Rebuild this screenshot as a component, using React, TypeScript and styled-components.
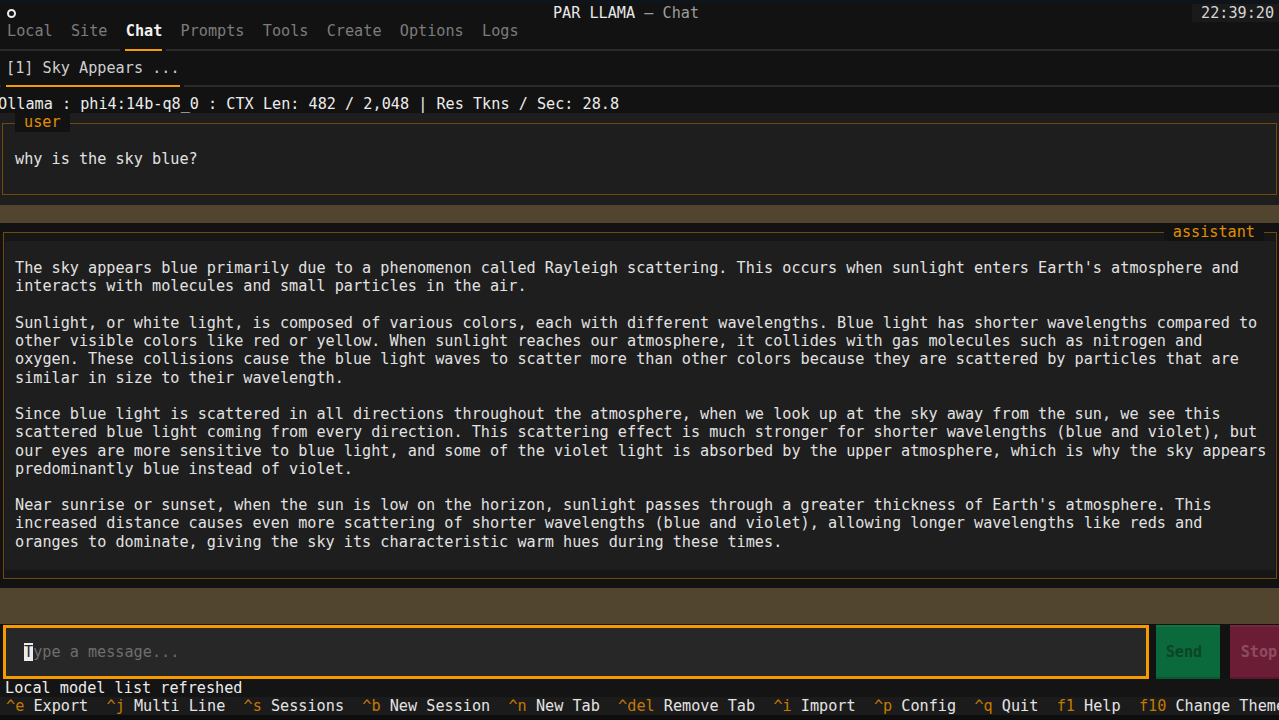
import React from "react";
import styled, { createGlobalStyle } from "styled-components";

const R = 18.24;
const C = 9.14;

const Global = createGlobalStyle`
  html, body { margin: 0; padding: 0; background: #121212; }
  body {
    width: 1279px; height: 720px; overflow: hidden;
    font-family: "DejaVu Sans Mono", "Liberation Mono", monospace;
    font-size: 15.18px; line-height: ${R}px; color: #e2e2e2;
  }
  * { box-sizing: border-box; }
`;

const Screen = styled.div`
  width: 1279px; height: 720px; display: flex; flex-direction: column;
  background: #121212; overflow: hidden; white-space: pre;
`;

const TopStrip = styled.div`
  height: 4px; flex: none; background: #0f141b;
`;

const Header = styled.header`
  height: ${R}px; flex: none; display: flex; align-items: center; background: #121212;
`;
const IconArea = styled.div`
  width: 60px; height: 100%; display: flex; align-items: center; padding-left: 7px;
`;
const HeaderIcon = styled.span`
  width: 9px; height: 9px; border: 2px solid #ececec; border-radius: 50%;
`;
const Title = styled.div`
  flex: 1; text-align: center; color: #e8e8e8;
`;
const TitleSub = styled.span`
  color: #9c9c9c;
`;
const Clock = styled.div`
  width: 87px; height: 100%; background: #1a1a1a; color: #d6d6d6; padding-left: 9px;
`;

const TabBar = styled.nav`
  height: ${2 * R}px; flex: none; display: flex; flex-direction: column;
`;
const TabLabels = styled.div<{ $left: number }>`
  height: ${R}px; display: flex; gap: ${2 * C}px; padding-left: ${(p) => p.$left}px;
`;
const Tab = styled.span<{ $active?: boolean; $sub?: boolean }>`
  color: ${(p) => (p.$sub ? "#cfcfcf" : p.$active ? "#f2f2f2" : "#7c7c7c")};
  font-weight: ${(p) => (p.$active ? "bold" : "normal")};
`;
const UnderlineRow = styled.div`
  height: ${R}px; display: flex; align-items: center;
`;
const Seg = styled.div<{ $w?: number; $kind: "grey" | "on" | "gap" }>`
  height: 2px;
  flex: ${(p) => (p.$w == null ? "1 1 auto" : `0 0 ${p.$w}px`)};
  background: ${(p) => (p.$kind === "grey" ? "#2b2b2b" : p.$kind === "on" ? "#f59a0c" : "transparent")};
`;

const Underline: React.FC<{ start: number; width: number }> = ({ start, width }) => (
  <UnderlineRow>
    <Seg $kind="grey" $w={start - 5} />
    <Seg $kind="gap" $w={5} />
    <Seg $kind="on" $w={width} />
    <Seg $kind="gap" $w={4} />
    <Seg $kind="grey" />
  </UnderlineRow>
);

const StatusLine = styled.div`
  height: ${R}px; flex: none; margin-left: -2px; color: #ececec;
`;

const UserWrap = styled.section`
  height: ${5 * R}px; flex: none; background: #1e1e1e;
  padding: ${R / 2}px 2px ${R / 2}px 2px;
  display: flex;
`;
const AssistantWrap = styled.section`
  height: ${20 * R}px; flex: none; background: #121212;
  padding: ${R / 2}px 2px ${R / 2}px 3px;
  display: flex;
`;
const Frame = styled.div<{ $bg: string }>`
  position: relative; flex: 1; border: 1px solid #70490c; background: ${(p) => p.$bg};
  display: flex; flex-direction: column;
`;
const FrameLabel = styled.span<{ $right?: boolean }>`
  position: absolute; top: ${-R / 2 - 1}px;
  ${(p) => (p.$right ? "right: 12px;" : "left: 12px;")}
  height: ${R}px; padding: 0 9px; background: #121212; color: #e38d00;
`;
const UserText = styled.div`
  padding: ${1.5 * R - 1}px 0 0 12px; color: #e2e2e2;
`;
const AssistantBody = styled.div`
  margin: 8px 1px; flex: 1; background: #1e1e1e; padding: ${R}px 0 0 10px; color: #e2e2e2;
`;
const Line = styled.div`
  height: ${R}px;
`;

const BrownBar = styled.div<{ $rows: number }>`
  height: ${(p) => p.$rows * R}px; flex: none; background: #524530;
`;

const InputRow = styled.div`
  height: ${3 * R}px; flex: none; display: flex; align-items: stretch; padding-top: 1px;
`;
const InputBox = styled.div`
  margin-left: 3px; width: 1146px; flex: none; border: 3px solid #f59b00; background: #272727;
  display: flex; align-items: center; padding-left: 18px; color: #6e6e6e;
`;
const Cursor = styled.span`
  background: #ececec; color: #272727;
`;
const Button = styled.div<{ $variant: "send" | "stop" }>`
  flex: none; width: 64px; display: flex; align-items: center; justify-content: flex-start;
  font-weight: bold;
  padding-left: ${(p) => (p.$variant === "send" ? "10px" : "11px")};
  margin-left: ${(p) => (p.$variant === "send" ? "6.7px" : "10px")};
  background: ${(p) => (p.$variant === "send" ? "#0b6a3b" : "#6b1d36")};
  color: ${(p) => (p.$variant === "send" ? "#0b4426" : "#8e4c63")};
  border-top: 2px solid ${(p) => (p.$variant === "send" ? "#0d7644" : "#782340")};
  border-bottom: 2px solid ${(p) => (p.$variant === "send" ? "#095a32" : "#5a172d")};
`;

const Notice = styled.div`
  height: ${R}px; flex: none; padding-left: 5px; color: #ececec; background: #141414;
`;

const Footer = styled.footer`
  height: ${R}px; flex: none; display: flex; gap: ${2 * C}px; padding-left: 6px;
  background: #1b1b1b; color: #e4e4e4;
`;
const FooterKey = styled.span`
  color: #c47a00;
`;
const BottomStrip = styled.div`
  flex: 1; background: #0d0d0d;
`;

const tabs = ["Local", "Site", "Chat", "Prompts", "Tools", "Create", "Options", "Logs"];

const paragraphs: string[][] = [
  [
    "The sky appears blue primarily due to a phenomenon called Rayleigh scattering. This occurs when sunlight enters Earth's atmosphere and",
    "interacts with molecules and small particles in the air.",
  ],
  [
    "Sunlight, or white light, is composed of various colors, each with different wavelengths. Blue light has shorter wavelengths compared to",
    "other visible colors like red or yellow. When sunlight reaches our atmosphere, it collides with gas molecules such as nitrogen and",
    "oxygen. These collisions cause the blue light waves to scatter more than other colors because they are scattered by particles that are",
    "similar in size to their wavelength.",
  ],
  [
    "Since blue light is scattered in all directions throughout the atmosphere, when we look up at the sky away from the sun, we see this",
    "scattered blue light coming from every direction. This scattering effect is much stronger for shorter wavelengths (blue and violet), but",
    "our eyes are more sensitive to blue light, and some of the violet light is absorbed by the upper atmosphere, which is why the sky appears",
    "predominantly blue instead of violet.",
  ],
  [
    "Near sunrise or sunset, when the sun is low on the horizon, sunlight passes through a greater thickness of Earth's atmosphere. This",
    "increased distance causes even more scattering of shorter wavelengths (blue and violet), allowing longer wavelengths like reds and",
    "oranges to dominate, giving the sky its characteristic warm hues during these times.",
  ],
];

const footerItems: [string, string][] = [
  ["^e", "Export"],
  ["^j", "Multi Line"],
  ["^s", "Sessions"],
  ["^b", "New Session"],
  ["^n", "New Tab"],
  ["^del", "Remove Tab"],
  ["^i", "Import"],
  ["^p", "Config"],
  ["^q", "Quit"],
  ["f1", "Help"],
  ["f10", "Change Theme"],
];

export default function App() {
  const lines: string[] = [];
  paragraphs.forEach((p, i) => {
    if (i > 0) lines.push("");
    lines.push(...p);
  });
  return (
    <>
      <Global />
      <Screen>
        <TopStrip />
        <Header>
          <IconArea>
            <HeaderIcon />
          </IconArea>
          <Title>
            PAR LLAMA <TitleSub>— Chat</TitleSub>
          </Title>
          <Clock>22:39:20</Clock>
        </Header>

        <TabBar>
          <TabLabels $left={7}>
            {tabs.map((t) => (
              <Tab key={t} $active={t === "Chat"}>
                {t}
              </Tab>
            ))}
          </TabLabels>
          <Underline start={125} width={37} />
        </TabBar>

        <TabBar>
          <TabLabels $left={6}>
            <Tab $sub>[1] Sky Appears ...</Tab>
          </TabLabels>
          <Underline start={6} width={174} />
        </TabBar>

        <StatusLine>Ollama : phi4:14b-q8_0 : CTX Len: 482 / 2,048 | Res Tkns / Sec: 28.8</StatusLine>

        <UserWrap>
          <Frame $bg="#1e1e1e">
            <FrameLabel>user</FrameLabel>
            <UserText>why is the sky blue?</UserText>
          </Frame>
        </UserWrap>

        <BrownBar $rows={1} />

        <AssistantWrap>
          <Frame $bg="#161616">
            <FrameLabel $right>assistant</FrameLabel>
            <AssistantBody>
              {lines.map((l, i) => (
                <Line key={i}>{l}</Line>
              ))}
            </AssistantBody>
          </Frame>
        </AssistantWrap>

        <BrownBar $rows={2} />

        <InputRow>
          <InputBox>
            <Cursor>T</Cursor>ype a message...
          </InputBox>
          <Button $variant="send">Send</Button>
          <Button $variant="stop">Stop</Button>
        </InputRow>

        <Notice>Local model list refreshed</Notice>

        <Footer>
          {footerItems.map(([k, l]) => (
            <span key={k}>
              <FooterKey>{k}</FooterKey> {l}
            </span>
          ))}
        </Footer>
        <BottomStrip />
      </Screen>
    </>
  );
}
